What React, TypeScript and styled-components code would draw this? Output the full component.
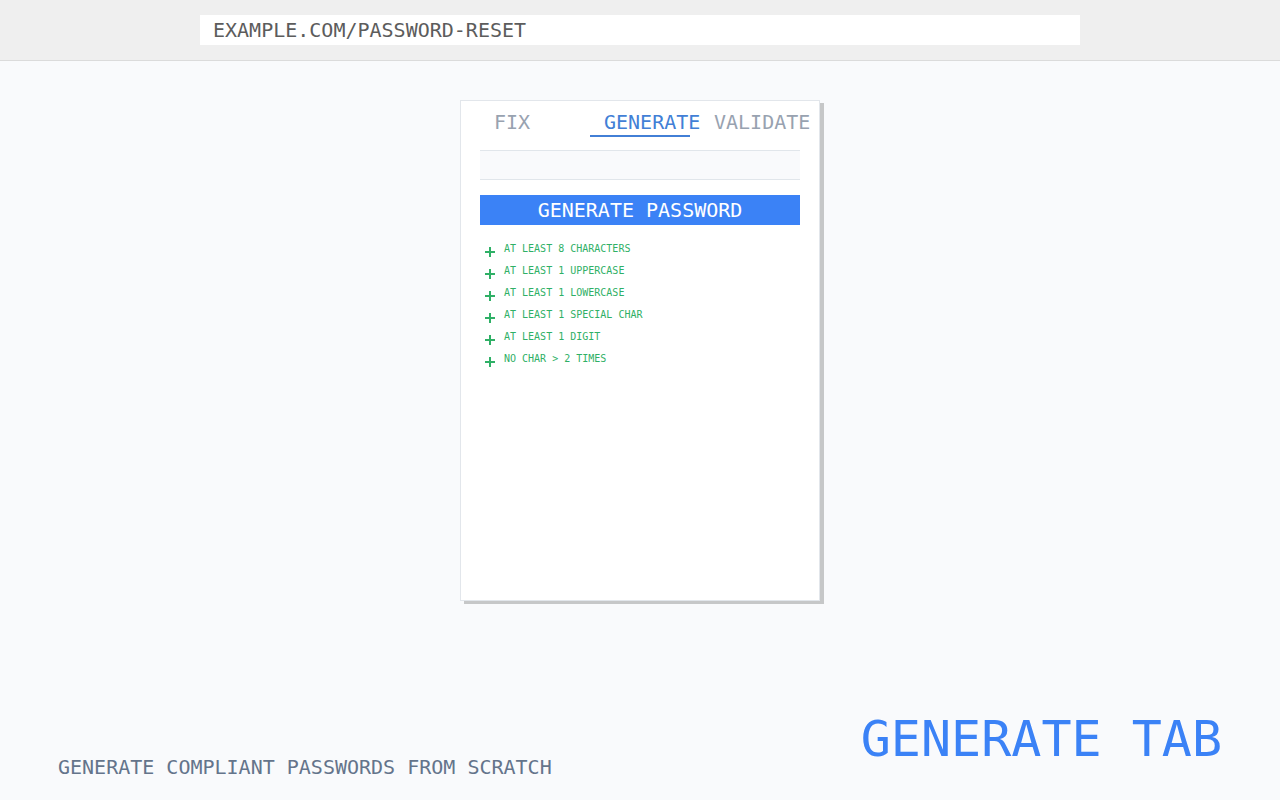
import { useState } from "react";
import styled, { createGlobalStyle } from "styled-components";

const GlobalStyle = createGlobalStyle`
  *, *::before, *::after { box-sizing: border-box; }
  body {
    margin: 0;
    background: #f9fafc;
    font-family: "DejaVu Sans Mono", "Liberation Mono", monospace;
    font-size: 20px;
    line-height: 30px;
  }
  button, input { font: inherit; }
`;

const Page = styled.div`
  min-height: 100vh;
  display: flex;
  flex-direction: column;
`;

const BrowserBar = styled.header`
  padding: 15px;
  background: #efefef;
  border-bottom: 1px solid #dbdbdb;
`;

const Address = styled.input`
  display: block;
  width: 100%;
  max-width: 880px;
  height: 30px;
  margin: 0 auto;
  padding: 0 13px;
  border: 0;
  background: #fff;
  color: #5c5c5c;
`;

const Main = styled.main`
  flex: 1;
  display: flex;
  justify-content: center;
  align-items: flex-start;
  padding: 39px 20px;
`;

const Card = styled.section`
  width: 100%;
  max-width: 360px;
  min-height: 501px;
  padding: 6px 19px 19px;
  border: 1px solid #e2e6eb;
  background: #fff;
  box-shadow: 4px 3px 0 #c6c7c8;
`;

const Tabs = styled.div`
  display: flex;
  gap: 10px;
`;

const Tab = styled.button<{ $active: boolean }>`
  flex: 0 0 100px;
  width: 100px;
  height: 30px;
  padding: 2px 0 0 14px;
  border: 0;
  border-bottom: 2px solid ${(p) => (p.$active ? "#427fd6" : "transparent")};
  background: none;
  color: ${(p) => (p.$active ? "#427fd6" : "#98a2b0")};
  text-align: left;
  line-height: 26px;
  white-space: nowrap;
`;

const PasswordField = styled.input`
  display: block;
  width: 100%;
  height: 30px;
  margin: 13px 0 15px;
  padding: 0 13px;
  border: solid #e1e6eb;
  border-width: 1px 0;
  background: #f9fafc;
  color: #5c5c5c;
`;

const GenerateButton = styled.button`
  display: block;
  width: 100%;
  height: 30px;
  padding: 0;
  border: 0;
  background: #3b82f6;
  color: #fff;
`;

const Rules = styled.ul`
  margin: 13px 0 0;
  padding: 0 5px;
  list-style: none;
`;

const Rule = styled.li`
  display: flex;
  align-items: flex-end;
  gap: 9px;
  color: #2fb066;
  font-size: 10px;
  line-height: 22px;
`;

const RuleIcon = styled.svg`
  flex: none;
  margin-bottom: 3px;
`;

const Footer = styled.footer`
  display: flex;
  justify-content: space-between;
  align-items: flex-end;
  padding: 0 58px 18px;
`;

const Caption = styled.p`
  margin: 0;
  color: #64748b;
`;

const Title = styled.h1`
  margin: 0 0 13px;
  color: #3b82f6;
  font-size: 50px;
  font-weight: 400;
  line-height: 60px;
`;

const tabs = ["FIX", "GENERATE", "VALIDATE"];

const rules = [
  "AT LEAST 8 CHARACTERS",
  "AT LEAST 1 UPPERCASE",
  "AT LEAST 1 LOWERCASE",
  "AT LEAST 1 SPECIAL CHAR",
  "AT LEAST 1 DIGIT",
  "NO CHAR > 2 TIMES",
];

const PlusIcon = () => (
  <RuleIcon width="10" height="10" viewBox="0 0 10 10" aria-hidden="true">
    <path d="M4 0h2v4h4v2H6v4H4V6H0V4h4z" fill="currentColor" />
  </RuleIcon>
);

export default function App() {
  const [active, setActive] = useState("GENERATE");
  return (
    <Page>
      <GlobalStyle />
      <BrowserBar>
        <Address aria-label="Address" defaultValue="EXAMPLE.COM/PASSWORD-RESET" />
      </BrowserBar>
      <Main>
        <Card>
          <Tabs role="tablist">
            {tabs.map((tab) => (
              <Tab
                key={tab}
                type="button"
                role="tab"
                aria-selected={tab === active}
                $active={tab === active}
                onClick={() => setActive(tab)}
              >
                {tab}
              </Tab>
            ))}
          </Tabs>
          <PasswordField aria-label="Password" />
          <GenerateButton type="button">GENERATE PASSWORD</GenerateButton>
          <Rules>
            {rules.map((rule) => (
              <Rule key={rule}>
                <PlusIcon />
                <span>{rule}</span>
              </Rule>
            ))}
          </Rules>
        </Card>
      </Main>
      <Footer>
        <Caption>GENERATE COMPLIANT PASSWORDS FROM SCRATCH</Caption>
        <Title>GENERATE TAB</Title>
      </Footer>
    </Page>
  );
}
